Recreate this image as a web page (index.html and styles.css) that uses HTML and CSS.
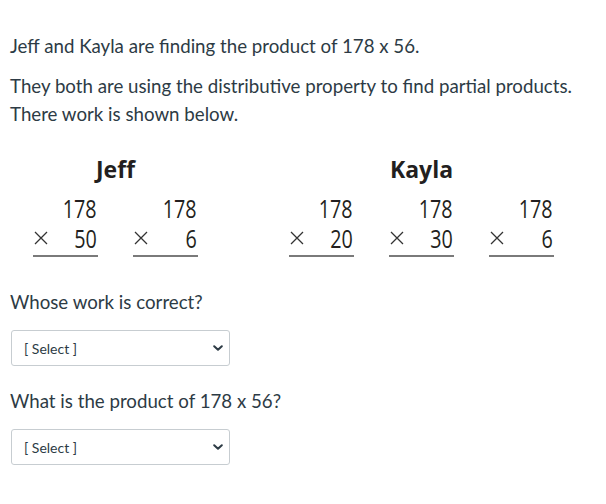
FILE: index.html
```html
<!DOCTYPE html>
<html lang="en">
<head>
<meta charset="utf-8">
<title>Partial products</title>
<link rel="stylesheet" href="styles.css">
</head>
<body>
<main class="page">
  <p class="text">Jeff and Kayla are finding the product of 178 x 56.</p>
  <p class="text gap">They both are using the distributive property to find partial products. There work is shown below.</p>

  <div class="figure">
    <div class="group">
      <div class="group-title">Jeff</div>
      <div class="cols">
        <div class="col">
          <div class="num"><span class="n">178</span></div>
          <div class="mult"><svg class="times" viewBox="0 0 14 14" width="14" height="14"><path d="M1 1 L13 13 M13 1 L1 13"/></svg><span class="n">50</span></div>
        </div>
        <div class="col">
          <div class="num"><span class="n">178</span></div>
          <div class="mult"><svg class="times" viewBox="0 0 14 14" width="14" height="14"><path d="M1 1 L13 13 M13 1 L1 13"/></svg><span class="n">6</span></div>
        </div>
      </div>
    </div>
    <div class="group">
      <div class="group-title">Kayla</div>
      <div class="cols">
        <div class="col">
          <div class="num"><span class="n">178</span></div>
          <div class="mult"><svg class="times" viewBox="0 0 14 14" width="14" height="14"><path d="M1 1 L13 13 M13 1 L1 13"/></svg><span class="n">20</span></div>
        </div>
        <div class="col">
          <div class="num"><span class="n">178</span></div>
          <div class="mult"><svg class="times" viewBox="0 0 14 14" width="14" height="14"><path d="M1 1 L13 13 M13 1 L1 13"/></svg><span class="n">30</span></div>
        </div>
        <div class="col">
          <div class="num"><span class="n">178</span></div>
          <div class="mult"><svg class="times" viewBox="0 0 14 14" width="14" height="14"><path d="M1 1 L13 13 M13 1 L1 13"/></svg><span class="n">6</span></div>
        </div>
      </div>
    </div>
  </div>

  <p class="text question">Whose work is correct?</p>
  <div class="select">
    <span>[ Select ]</span>
    <svg class="chev" viewBox="0 0 10 6" width="10" height="6"><path d="M1.2 1.2 L5 4.8 L8.8 1.2"/></svg>
  </div>

  <p class="text question q2">What is the product of 178 x 56?</p>
  <div class="select">
    <span>[ Select ]</span>
    <svg class="chev" viewBox="0 0 10 6" width="10" height="6"><path d="M1.2 1.2 L5 4.8 L8.8 1.2"/></svg>
  </div>
</main>
</body>
</html>
```

FILE: styles.css
```css
html, body {
  margin: 0;
  padding: 0;
  background: #ffffff;
}

.page {
  padding: 32px 10px 0 10px;
  font-family: "Lato", "Liberation Sans", sans-serif;
  color: #2d3b45;
}

.text {
  margin: 0;
  font-size: 18.7px;
  line-height: 28px;
}

.gap {
  margin-top: 12px;
}

.figure {
  display: flex;
  gap: 91px;
  margin: 26px 0 0 23px;
  font-family: "Open Sans", "Noto Sans", sans-serif;
  color: #231f20;
}

.group {
  display: flex;
  flex-direction: column;
  align-items: center;
}

.group-title {
  font-weight: 700;
  font-size: 23px;
  line-height: 30px;
  margin-bottom: 9px;
}

.cols {
  display: flex;
  gap: 35px;
}

.col {
  width: 65px;
  padding-bottom: 2px;
  border-bottom: 2px solid #7a7a7a;
  font-size: 26px;
  font-weight: 500;
  line-height: 30px;
}

.num {
  text-align: right;
  padding-right: 1px;
}

.n {
  display: inline-block;
  transform: scaleX(0.76);
  transform-origin: right center;
}

.mult {
  display: flex;
  justify-content: space-between;
  align-items: center;
  padding: 0 1px;
}

.times {
  display: block;
}

.times path {
  fill: none;
  stroke: #333333;
  stroke-width: 1.3;
}

.question {
  margin-top: 31px;
}

.q2 {
  margin-top: 21px;
}

.select {
  box-sizing: border-box;
  width: 219px;
  height: 36px;
  margin: 14px 0 0 1px;
  padding: 0 6px 0 12px;
  border: 1px solid #c7cdd1;
  border-radius: 3px;
  display: flex;
  align-items: center;
  justify-content: space-between;
  font-size: 14px;
  color: #2d3b45;
}

.chev path {
  fill: none;
  stroke: #2d3b45;
  stroke-width: 2;
  stroke-linecap: round;
  stroke-linejoin: round;
}
```
